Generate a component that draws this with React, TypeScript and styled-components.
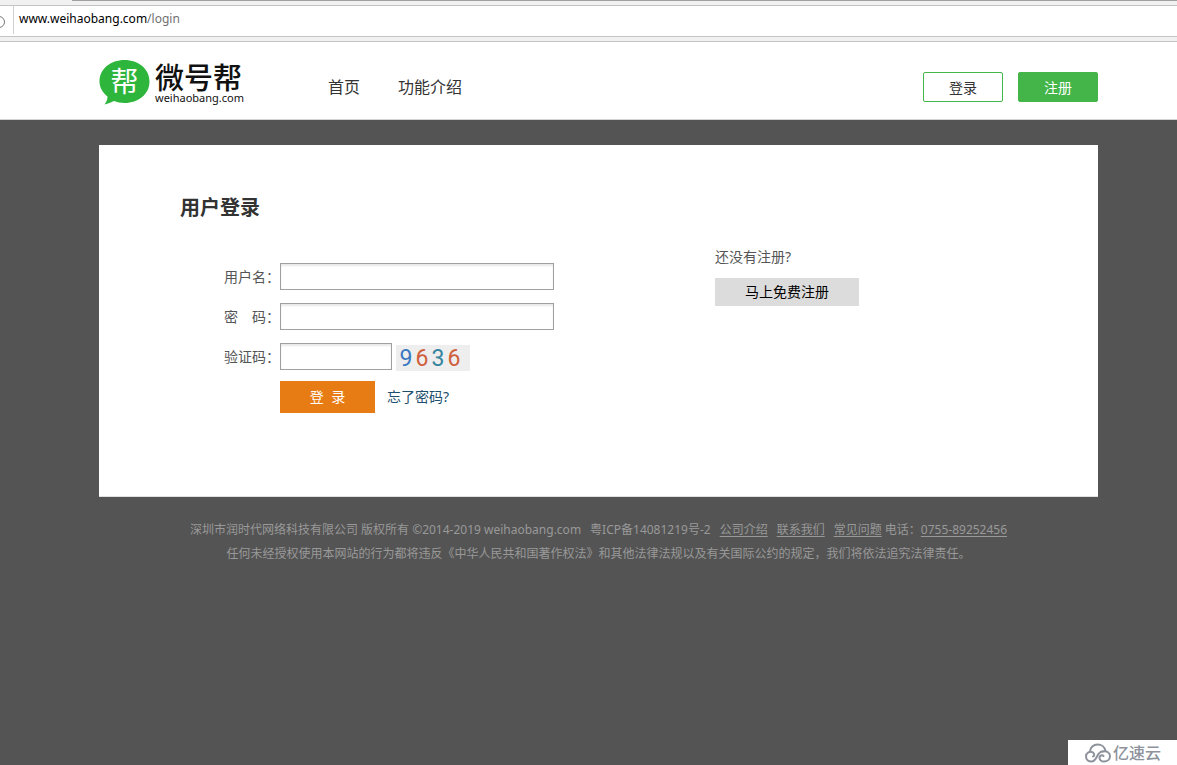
import React from "react";
import styled, { createGlobalStyle } from "styled-components";

const GlobalStyle = createGlobalStyle`
  *, *::before, *::after { box-sizing: border-box; }
  body {
    margin: 0;
    background: #545454;
    color: #555;
    font-family: "Noto Sans", "Noto Sans CJK SC", sans-serif;
    font-size: 14px;
  }
  button, input { font: inherit; }
  h1, p { margin: 0; }
`;

const BrowserBar = styled.div`
  background: #f1f1f1;
  border-bottom: 1px solid #c4c4c4;
  padding-bottom: 4px;
`;

const TabEdge = styled.div`
  height: 5px;
  margin-left: 72px;
  border-top: 1px solid #a0a0a0;
`;

const AddressRow = styled.div`
  display: flex;
  align-items: center;
  height: 32px;
  background: #fff;
  border: solid #c4c4c4;
  border-width: 1px 0;
`;

const InfoMark = styled.svg`
  width: 13px;
  height: 26px;
  flex: none;
`;

const Address = styled.div`
  align-self: flex-start;
  height: 28px;
  line-height: 26px;
  padding-left: 5px;
  border-left: 1px solid #d0d0d0;
  color: #000;
  font-size: 12px;
`;

const AddressPath = styled.span`
  color: #707070;
`;

const Shell = styled.div`
  padding-left: 20px;
`;

const Container = styled.div`
  max-width: 999px;
  margin: 0 auto;
`;

const Header = styled.header`
  background: #fff;
  border-bottom: 1px solid #d4d4d4;
`;

const HeaderRow = styled(Container)`
  display: flex;
  align-items: center;
  height: 77px;
`;

const Logo = styled.a`
  display: flex;
  align-items: flex-start;
  gap: 5px;
  padding-top: 3px;
  color: #111;
  text-decoration: none;
`;

const Bubble = styled.svg`
  width: 51px;
  height: 46px;
`;

const LogoText = styled.span`
  display: flex;
  flex-direction: column;
  width: 92px;
  padding-top: 4px;
`;

const LogoName = styled.span`
  font-size: 29px;
  line-height: 30px;
  font-weight: 500;
  white-space: nowrap;
`;

const LogoDomain = styled.span`
  font-size: 11px;
  line-height: 10px;
`;

const Nav = styled.nav`
  display: flex;
  flex: 1;
  gap: 38px;
  padding: 12px 0 0 81px;
`;

const NavLink = styled.a`
  color: #333;
  font-size: 16px;
  line-height: 24px;
  text-decoration: none;
`;

const Actions = styled.div`
  display: flex;
  gap: 15px;
  padding-top: 13px;
`;

const HeaderButton = styled.button<{ $filled?: boolean }>`
  width: 80px;
  height: 30px;
  padding: 0;
  border: 1px solid #43b549;
  border-radius: 2px;
  background: ${(p) => (p.$filled ? "#43b549" : "#fff")};
  color: ${(p) => (p.$filled ? "#fff" : "#333")};
`;

const Panel = styled(Container)`
  display: flex;
  margin-top: 25px;
  min-height: 352px;
  padding: 38px 81px 0;
  background: #fff;
  border-bottom: 1px solid #e0e0e0;
`;

const LoginColumn = styled.form`
  width: 535px;
`;

const Title = styled.h1`
  margin-bottom: 24px;
  color: #333;
  font-size: 20px;
  line-height: 50px;
`;

const Row = styled.div`
  display: flex;
  align-items: center;
  height: 40px;
  padding-bottom: 2px;
`;

const Label = styled.label`
  width: 100px;
  text-align: right;
  white-space: pre;
`;

const TextInput = styled.input<{ $short?: boolean }>`
  width: ${(p) => (p.$short ? "112px" : "274px")};
  height: 27px;
  padding: 0 5px;
  border: 1px solid #a0a0a0;
  background: #fff;
  box-shadow: inset 0 2px 2px #e8e8e8;
`;

const Captcha = styled.span`
  display: flex;
  width: 74px;
  height: 26px;
  margin: 4px 0 0 4px;
  padding-left: 2px;
  background: #eee;
  font-family: Roboto, sans-serif;
  font-size: 23px;
  line-height: 28px;
`;

const Digit = styled.span<{ $color: string }>`
  width: 16px;
  color: ${(p) => p.$color};
  text-align: center;
`;

const SubmitRow = styled(Row)`
  padding: 0 0 0 100px;
  gap: 12px;
`;

const Submit = styled.button`
  width: 95px;
  height: 32px;
  padding: 0 0 2px;
  border: 0;
  background: #e87c14;
  color: #fff;
  white-space: pre;
`;

const ForgotLink = styled.a`
  padding-bottom: 2px;
  color: #1d4f6e;
  text-decoration: none;
`;

const RegisterColumn = styled.aside`
  padding-top: 63px;
  line-height: 22px;
`;

const RegisterButton = styled.button`
  display: block;
  width: 144px;
  height: 28px;
  margin-top: 10px;
  padding: 0;
  border: 0;
  background: #dcdcdc;
  color: #000;
`;

const Footer = styled.footer`
  padding-top: 21px;
  color: #999;
  font-size: 12px;
  line-height: 24px;
  text-align: center;

  a { color: inherit; text-underline-offset: 2px; }
`;

const FooterLine = styled.p`
  display: flex;
  flex-wrap: wrap;
  justify-content: center;
  column-gap: 9px;
`;

const Watermark = styled.div`
  position: fixed;
  right: 0;
  bottom: 0;
  display: flex;
  align-items: center;
  gap: 2px;
  width: 109px;
  height: 25px;
  padding-left: 17px;
  background: #fff;
  color: #8d929c;
  font-size: 16px;
  line-height: 24px;
  font-weight: 500;
`;

const digits = [
  { value: "9", color: "#3a78c0" },
  { value: "6", color: "#d0603c" },
  { value: "3", color: "#3484a0" },
  { value: "6", color: "#d0603c" },
];

export default function App() {
  return (
    <>
      <GlobalStyle />
      <BrowserBar>
        <TabEdge />
        <AddressRow>
          <InfoMark viewBox="0 0 13 26" aria-hidden="true">
            <circle cx="-1" cy="14" r="5.5" fill="none" stroke="#777" />
          </InfoMark>
          <Address>
            www.weihaobang.com<AddressPath>/login</AddressPath>
          </Address>
        </AddressRow>
      </BrowserBar>

      <Header>
        <Shell>
          <HeaderRow>
            <Logo href="#">
              <Bubble viewBox="0 0 51 46" aria-hidden="true">
                <path
                  d="M25.500 1C39.500 1 50.500 10 50.500 22.500S39.500 44 25.500 44C21.500 44 18 43.300 15 42C12 43.500 9 44.500 5.500 45.500C7.500 43 8.500 40.500 8.500 37.500C3.500 33.500 0.500 28.500 0.500 22.500C0.500 10 11.500 1 25.500 1Z"
                  fill="#2eb53c"
                />
                <text x="25.500" y="33" textAnchor="middle" fontSize="28" fill="#fff">
                  帮
                </text>
              </Bubble>
              <LogoText>
                <LogoName>微号帮</LogoName>
                <LogoDomain>weihaobang.com</LogoDomain>
              </LogoText>
            </Logo>
            <Nav>
              <NavLink href="#">首页</NavLink>
              <NavLink href="#">功能介绍</NavLink>
            </Nav>
            <Actions>
              <HeaderButton type="button">登录</HeaderButton>
              <HeaderButton type="button" $filled>注册</HeaderButton>
            </Actions>
          </HeaderRow>
        </Shell>
      </Header>

      <Shell>
        <Panel as="main">
          <LoginColumn onSubmit={(e) => e.preventDefault()}>
            <Title>用户登录</Title>
            <Row>
              <Label htmlFor="user">用户名：</Label>
              <TextInput id="user" type="text" />
            </Row>
            <Row>
              <Label htmlFor="password">密　码：</Label>
              <TextInput id="password" type="password" />
            </Row>
            <Row>
              <Label htmlFor="code">验证码：</Label>
              <TextInput id="code" type="text" $short />
              <Captcha>
                {digits.map((d, i) => (
                  <Digit key={i} $color={d.color}>{d.value}</Digit>
                ))}
              </Captcha>
            </Row>
            <SubmitRow>
              <Submit type="submit">{"登  录"}</Submit>
              <ForgotLink href="#">忘了密码?</ForgotLink>
            </SubmitRow>
          </LoginColumn>
          <RegisterColumn>
            <p>还没有注册?</p>
            <RegisterButton type="button">马上免费注册</RegisterButton>
          </RegisterColumn>
        </Panel>

        <Footer>
          <FooterLine>
            <span>深圳市润时代网络科技有限公司 版权所有 ©2014-2019 weihaobang.com</span>
            <span>粤ICP备14081219号-2</span>
            <a href="#">公司介绍</a>
            <a href="#">联系我们</a>
            <span>
              <a href="#">常见问题</a> 电话：<a href="tel:0755-89252456">0755-89252456</a>
            </span>
          </FooterLine>
          <p>任何未经授权使用本网站的行为都将违反《中华人民共和国著作权法》和其他法律法规以及有关国际公约的规定，我们将依法追究法律责任。</p>
        </Footer>
      </Shell>

      <Watermark>
        <svg width="26" height="20" viewBox="0 0 26 20" fill="none" stroke="#8d929c" strokeWidth="2" strokeLinecap="round" aria-hidden="true">
          <path d="M5 8.500C5 4.500 8.500 1.500 12.700 1.500C16.600 1.500 19.700 4 20.300 7.500" />
          <path d="M8 13.500C9.500 13.500 9.800 11 8 9.500C5 7.500 1 9.800 1 13.500C1 16.500 3.500 18.500 6.500 18.500C12.500 18.500 11.500 8.500 17.500 8.500" />
          <path d="M18.500 13C17 11.500 14.500 12.500 14.500 14.700C14.500 17 16.500 18.500 19 18.500C22.300 18.500 25 16.300 25 13C25 10 22 7.500 17.500 8.500" />
        </svg>
        <span>亿速云</span>
      </Watermark>
    </>
  );
}
